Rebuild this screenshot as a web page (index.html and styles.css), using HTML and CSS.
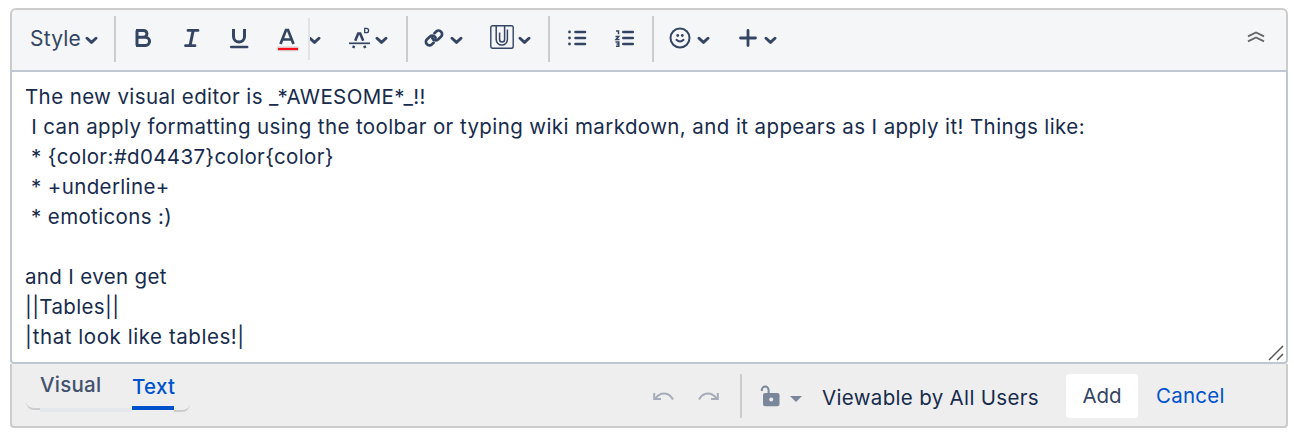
FILE: index.html
```html
<!DOCTYPE html>
<html lang="en">
<head>
<meta charset="utf-8">
<title>Comment editor</title>
<link rel="stylesheet" href="styles.css">
</head>
<body>
<svg class="defs" width="0" height="0">
  <symbol id="chev" viewBox="0 0 13 9"><path d="M2 2.2 6.5 6.4 11 2.2" fill="none" stroke="currentColor" stroke-width="2.9" stroke-linecap="round" stroke-linejoin="round"/></symbol>
</svg>
<main class="editor">
  <header class="toolbar">
    <div class="group group-style"><span class="style-label">Style</span><svg class="chev"><use href="#chev"/></svg></div>
    <div class="group group-format">
      <svg class="icon" viewBox="0 0 24 24"><path d="M6 4.500V19.500M5 4.500H12.500a3.400 3.400 0 0 1 0 6.900H6.500M12.500 11.400H14.500a4 4 0 0 1 0 8.100H5" transform="translate(0 -.1)" fill="none" stroke="currentColor" stroke-width="3"/></svg>
      <svg class="icon" viewBox="0 0 24 24"><path d="M9 4.400H19M6.500 19.700H16" fill="none" stroke="currentColor" stroke-width="2.800" stroke-linecap="round"/><path d="M14.200 4.400 11 19.700" fill="none" stroke="currentColor" stroke-width="3"/></svg>
      <svg class="icon" viewBox="0 0 24 24"><path d="M6.500 3V10.500a5.500 5.500 0 0 0 11 0V3" fill="none" stroke="currentColor" stroke-width="3"/><path d="M4.200 21H20.200" stroke="currentColor" stroke-width="2.500" stroke-linecap="round"/></svg>
      <svg class="icon" viewBox="0 0 24 24"><path d="M5.500 18 11 4h2l5.500 14M7.500 13.500h9" fill="none" stroke="currentColor" stroke-width="2.700"/><rect x="1.300" y="20" width="23" height="5.500" rx="2.500" fill="#dfe1e5"/><path d="M3 23H23" stroke="#fa0f18" stroke-width="2.300"/></svg>
      <span class="split"><svg class="chev"><use href="#chev"/></svg></span>
      <svg class="icon icon-clear" viewBox="0 0 24 24"><path d="M1 17.300H22" stroke="currentColor" stroke-width="1.700"/><path d="M7.200 14.700 10.200 7.500h2l3 7.200M5.200 22l.9-2.200M17.200 22l-.9-2.200" fill="none" stroke="currentColor" stroke-width="2.600"/><path d="M16.700 2.300h1.700a2.200 2.200 0 0 1 0 4.400H16.700Z" fill="none" stroke="currentColor" stroke-width="1.300"/></svg>
      <svg class="chev chev-clear"><use href="#chev"/></svg>
    </div>
    <div class="group group-insert">
      <svg class="icon" viewBox="0 0 24 24"><g transform="rotate(-42 12 12)" fill="none" stroke="currentColor" stroke-width="2.700" stroke-linecap="round"><path d="M8.500 15.300H6a3.500 3.500 0 0 1 0-7H10a3.500 3.500 0 0 1 3.300 4.700"/><path d="M15.500 8.700H18a3.500 3.500 0 0 1 0 7H14a3.500 3.500 0 0 1-3.300-4.700"/></g></svg>
      <svg class="chev chev-link"><use href="#chev"/></svg>
      <svg class="icon icon-clip" viewBox="0 0 24 24"><rect x=".8" y=".8" width="22.400" height="22.400" rx="1.800" fill="none" stroke="currentColor" stroke-width="1.400"/><path d="M6.200 1V14.500a5.600 5.600 0 0 0 11.200 0V4.500M14.600 4.500V14.500a2.500 2.500 0 0 1-5 0V7.500M14.600 1V5M9.600 7.500V14" fill="none" stroke="currentColor" stroke-width="1.500"/></svg>
      <svg class="chev chev-clip"><use href="#chev"/></svg>
    </div>
    <div class="group group-lists">
      <svg class="icon" viewBox="0 0 24 24"><path d="M10.500 6h9.500M10.500 12h9.500M10.500 18h9.500" stroke="currentColor" stroke-width="2.600" stroke-linecap="round"/><g fill="currentColor"><circle cx="4.500" cy="6" r="1.400"/><circle cx="4.500" cy="12" r="1.400"/><circle cx="4.500" cy="18" r="1.400"/></g></svg>
      <svg class="icon" viewBox="0 0 24 24"><path d="M10.300 6h9.500M10.300 12h9.500M10.300 18h9.500" stroke="currentColor" stroke-width="2.600" stroke-linecap="round"/><path d="M3 4.900H5.500V8.200M2.500 10.500H5.700L3 13.600H6.500M2.500 16H5.800V20.300H3M3.500 18H5.800" fill="none" stroke="currentColor" stroke-width="1.500"/></svg>
    </div>
    <div class="group group-more">
      <svg class="icon" viewBox="0 0 24 24"><circle cx="12" cy="12" r="9.500" fill="none" stroke="currentColor" stroke-width="2"/><circle cx="9.700" cy="9.500" r="1.400" fill="currentColor"/><circle cx="14.300" cy="9.500" r="1.400" fill="currentColor"/><path d="M8.400 13.800q3.600 3.400 7.200 0" fill="none" stroke="currentColor" stroke-width="1.900" stroke-linecap="round"/></svg>
      <svg class="chev chev-emoji"><use href="#chev"/></svg>
      <svg class="icon icon-plus" viewBox="0 0 24 24"><path d="M4.500 12H19.500M12 4.500V19.500" stroke="currentColor" stroke-width="2.800" stroke-linecap="round"/></svg>
      <svg class="chev chev-plus"><use href="#chev"/></svg>
    </div>
    <svg class="collapse" viewBox="0 0 18 12"><path d="M1 5.400 9 1.500 17 5.400M1 10.400 9 6.500 17 10.400" fill="none" stroke="#666" stroke-width="1.900"/></svg>
  </header>
  <section class="content">
    <div class="line l1">The new visual editor is _*AWESOME*_!!</div>
    <div class="line l2"> I can apply formatting using the toolbar or typing wiki markdown, and it appears as I apply it! Things like:</div>
    <div class="line l3"> * {color:#d04437}color{color}</div>
    <div class="line l4"> * +underline+</div>
    <div class="line l5"> * emoticons :)</div>
    <div class="line"></div>
    <div class="line l6">and I even get</div>
    <div class="line l7">||Tables||</div>
    <div class="line l8">|that look like tables!|</div>
    <svg class="grip" viewBox="0 0 16 16"><path d="M1 15 15 1M9 15l6-6" stroke="#555" stroke-width="1.500"/></svg>
  </section>
  <footer class="footer">
    <nav class="tabs">
      <span class="edge edge-left"></span>
      <span class="tab tab-visual"><span>Visual</span></span>
      <span class="tab tab-text"><span>Text</span></span>
      <span class="edge edge-right"></span>
    </nav>
    <div class="actions">
      <svg class="history" viewBox="0 0 22 12"><path d="M1.200 2V8H8M2.500 7.500C7 .6 16 .6 20 8.500" fill="none" stroke="currentColor" stroke-width="2"/></svg>
      <svg class="history history-redo" viewBox="0 0 22 12"><path d="M20.800 2V8H14M19.500 7.500C15 .6 6 .6 2 8.500" fill="none" stroke="currentColor" stroke-width="2"/></svg>
      <span class="rule"></span>
      <svg class="lock" viewBox="0 0 20 22"><path d="M1.800 6V5a3.400 3.400 0 0 1 6.800 0V9" fill="none" stroke="currentColor" stroke-width="2"/><rect x="3" y="8" width="16.500" height="13.200" rx="2.200" fill="currentColor"/><circle cx="11.200" cy="14.500" r="2" fill="#eee"/></svg>
      <span class="caret"></span>
      <span class="viewable">Viewable by All Users</span>
      <button class="add" type="button"><span>Add</span></button>
      <span class="cancel">Cancel</span>
    </div>
  </footer>
</main>
</body>
</html>
```

FILE: styles.css
```css
* { box-sizing: border-box; }
body { margin: 0; padding: 8px 6px 0 10px; background: #fff; font: 20.5px/30px Inter, "Liberation Sans", sans-serif; color: #172b4d; }
.defs { display: block; }
.editor { width: 1278px; height: 420px; display: flex; flex-direction: column; }
.toolbar { height: 62px; flex: none; display: flex; align-items: center; border: 2px solid #ccc; border-bottom: 0; border-radius: 6px 6px 0 0; background: #f5f6f8; color: #344563; padding-bottom: 2px; }
.group { height: 46px; display: flex; align-items: center; flex: none; border-right: 2px solid #ccc; }
.group-style { width: 104px; padding-left: 18px; }
.style-label { font-size: 21px; width: 55px; letter-spacing: .2px; white-space: nowrap; }
.icon { width: 24px; height: 24px; flex: none; overflow: visible; margin-top: -2px; }
.chev { width: 13px; height: 9px; flex: none; margin-top: 2px; }
.group-format { width: 292px; padding-left: 15px; }
.group-format .icon + .icon { margin-left: 24px; }
.split { width: 14px; height: 42px; margin-left: 9px; display: flex; align-items: center; border-left: 2px solid #e2e3e6; overflow: hidden; }
.split .chev { margin-left: -2px; }
.icon-clear { margin-left: 26px; }
.chev-clear { margin-left: 3px; }
.group-insert { width: 142px; padding-left: 14px; }
.chev-link { margin-left: 4px; }
.icon-clip { margin-left: 27px; margin-top: -4px; }
.chev-clip { margin-left: 4px; }
.group-lists { width: 104px; padding-left: 15px; gap: 24px; }
.group-more { border-right: 0; padding-left: 14px; }
.chev-emoji { margin-left: 5px; }
.icon-plus { margin-left: 26px; }
.chev-plus { margin-left: 4px; }
.collapse { width: 18px; height: 12px; margin: -4px 21px 0 auto; }
.content { position: relative; height: 294px; flex: none; border: 2px solid #c1c7d0; border-radius: 0 0 4px 4px; padding: 10px 13px; }
.line { height: 30px; white-space: pre; letter-spacing: .35px; }
.l1 { letter-spacing: .39px; }
.l2 { letter-spacing: .4px; }
.l8 { letter-spacing: .56px; }
.grip { position: absolute; right: 2px; bottom: 1px; width: 16px; height: 16px; }
.footer { height: 64px; flex: none; display: flex; justify-content: space-between; background: #eee; border: 2px solid #ccc; border-top: 0; border-radius: 0 0 4px 4px; }
.tabs { display: flex; padding-left: 14px; height: 48px; font-weight: 500; letter-spacing: .25px; }
.edge { width: 14px; height: 8px; align-self: flex-end; border-bottom: 2px solid #ccc; }
.edge-left { border-bottom-left-radius: 8px; margin-bottom: 2px; }
.edge-right { width: 16px; border-bottom-right-radius: 8px; }
.tab { display: block; }
.tab-visual { width: 92px; height: 48px; padding-top: 6px; border-bottom: 4px solid #e4e8ee; color: #42526e; }
.tab-text { width: 42px; height: 46px; padding-top: 8px; border-bottom: 4px solid #0052cc; color: #0052cc; }
.actions { display: flex; align-items: center; width: 633px; }
.history { width: 22px; height: 12px; color: #a5adba; margin-top: 3px; }
.history-redo { margin-left: 22px; }
.rule { width: 2px; height: 44px; background: #ccc; margin: 2px 0 0 21px; }
.lock { width: 20px; height: 22px; color: #7a869a; margin: 2px 0 0 18px; }
.caret { border: 6px solid transparent; border-top-color: #7a869a; border-bottom: 0; margin: 7px 0 0 10px; }
.viewable { margin: 6px 0 0 20px; width: 244px; white-space: nowrap; letter-spacing: .33px; }
.add { width: 72px; height: 44px; border: 0; border-radius: 4px; background: #fff; font: inherit; color: #344563; padding: 0; margin-top: 2px; }
.cancel { color: #0052cc; margin: 2px 0 0 18px; letter-spacing: .25px; }
```
